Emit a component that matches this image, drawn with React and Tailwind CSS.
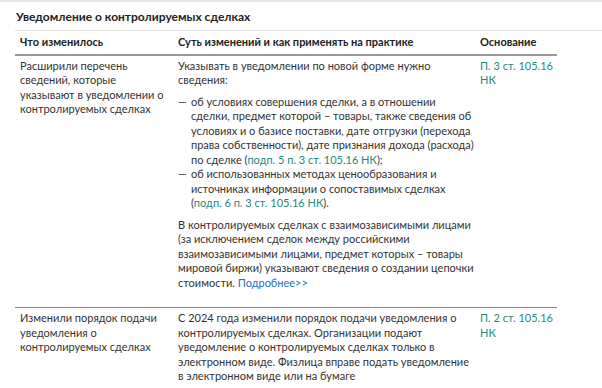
export default function App() {
  return (
    <div
      className="w-[602px] h-[388px] overflow-hidden bg-white border-t-2 border-[#e6e6e6] text-[#333333]"
      style={{ fontFamily: 'Lato, "Liberation Sans", sans-serif' }}
    >
      <div className="ml-[15px] border-b border-[#e3e3e3] pt-[6px] pb-[5px]">
        <h1 className="pl-px text-[12px] leading-[17px] font-bold text-[#222222]">
          Уведомление о контролируемых сделках
        </h1>
      </div>

      <div className="ml-[15px] w-[542px] text-[11px] leading-[14.5px]">
        <div className="flex border-b-2 border-[#9a9a9a] pt-[4px] pb-[4px] font-bold text-[11px] leading-[14.7px] text-[#222222]">
          <div className="w-[163px] pl-[5px]">Что изменилось</div>
          <div className="w-[302px]">Суть изменений и как применять на практике</div>
          <div className="flex-1">Основание</div>
        </div>

        <div className="flex pt-[3px] pb-[17px] border-b border-[#8a8a8a]">
          <div className="w-[163px] pl-[5px] pr-[8px]">
            Расширили перечень сведений, которые
            <br />
            указывают в уведомлении о контролируемых сделках
          </div>
          <div className="w-[302px] pr-[6px]">
            <p>Указывать в уведомлении по новой форме нужно сведения:</p>
            <ul className="mt-[7px]">
              <li className="flex">
                <span className="w-[13px] shrink-0">—</span>
                <span>
                  об условиях совершения сделки, а в отношении сделки, предмет которой – товары, также сведения об условиях и о базисе поставки, дате отгрузки (перехода права собственности), дате признания дохода (расхода) по сделке (<span className="text-[#1f8a7d]">подп. 5 п. 3 ст. 105.16 НК</span>);
                </span>
              </li>
              <li className="flex">
                <span className="w-[13px] shrink-0">—</span>
                <span>
                  об использованных методах ценообразования и источниках информации о сопоставимых сделках (<span className="text-[#1f8a7d]">подп. 6 п. 3 ст. 105.16 НК</span>).
                </span>
              </li>
            </ul>
            <p className="mt-[7px]">
              В контролируемых сделках с взаимозависимыми лицами (за исключением сделок между российскими взаимозависимыми лицами, предмет которых – товары мировой биржи) указывают сведения о создании цепочки стоимости. <span className="text-[#2a6bcc]">Подробнее&gt;&gt;</span>
            </p>
          </div>
          <div className="flex-1 pr-[4px] text-[#1f8a7d]">П. 3 ст. 105.16 НК</div>
        </div>

        <div className="flex pt-[3px]">
          <div className="w-[163px] pl-[5px] pr-[16px]">
            Изменили порядок подачи уведомления о контролируемых сделках
          </div>
          <div className="w-[302px] pr-[6px]">
            С 2024 года изменили порядок подачи уведомления о контролируемых сделках. Организации подают уведомление о контролируемых сделках только в электронном виде. Физлица вправе подать уведомление в электронном виде или на бумаге
          </div>
          <div className="flex-1 pr-[4px] text-[#1f8a7d]">П. 2 ст. 105.16 НК</div>
        </div>
      </div>
    </div>
  );
}
